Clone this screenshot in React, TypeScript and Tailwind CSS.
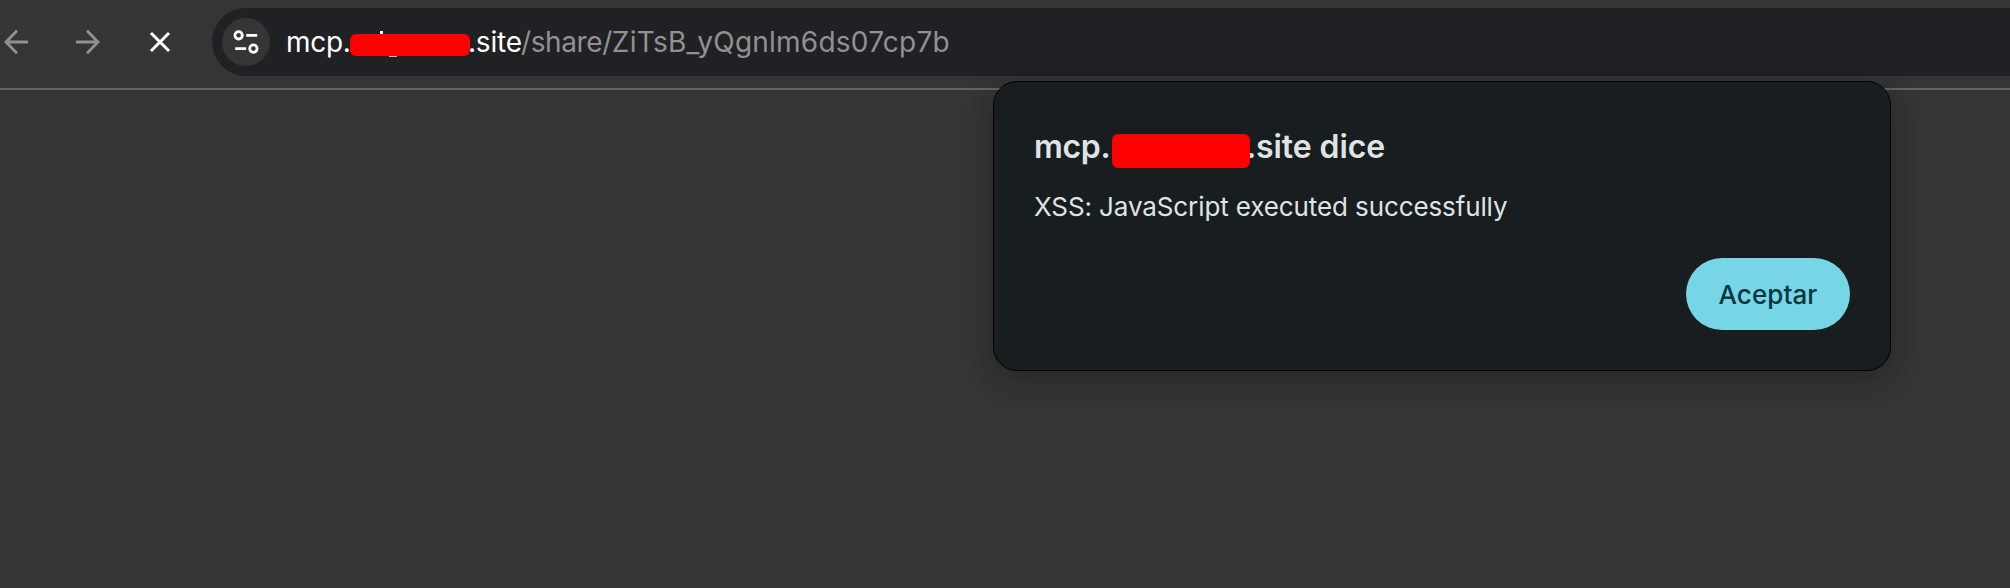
function BackIcon() {
  return (
    <svg width="26" height="26" viewBox="0 0 26 26" fill="none" stroke="#919191" strokeWidth="2.8" className="block">
      <path d="M25 13H2.5M14 1.8L3 13L14 24.2" />
    </svg>
  );
}

function ForwardIcon() {
  return (
    <svg width="26" height="26" viewBox="0 0 26 26" fill="none" stroke="#919191" strokeWidth="2.8" className="block">
      <path d="M0 13H22.5M11 1.8L22 13L11 24.2" />
    </svg>
  );
}

function StopIcon() {
  return (
    <svg width="22" height="22" viewBox="0 0 22 22" fill="none" stroke="#ffffff" strokeWidth="3" className="block">
      <path d="M2 2L20 20M20 2L2 20" />
    </svg>
  );
}

function TuneIcon() {
  return (
    <svg width="26" height="26" viewBox="0 0 26 26" fill="none" stroke="#ffffff" strokeWidth="2.8" className="block">
      <circle cx="5.6" cy="6.3" r="3.7" />
      <path d="M13.2 6.3H24.2M2.2 19.6H13.2" />
      <circle cx="20.4" cy="19.6" r="3.7" />
    </svg>
  );
}

function Toolbar() {
  return (
    <header className="flex h-[90px] items-start border-b-2 border-[#646464]">
      <div className="flex h-[84px] w-[212px] shrink-0 items-center pl-[3px]">
        <BackIcon />
        <div className="ml-[47px]">
          <ForwardIcon />
        </div>
        <div className="ml-[47px]">
          <StopIcon />
        </div>
      </div>
      <div className="mt-2 flex h-[68px] flex-1 items-center rounded-l-full bg-[#202124] pl-2.5">
        <div className="flex size-12 shrink-0 items-center justify-center rounded-full bg-[#353535]">
          <TuneIcon />
        </div>
        <div className="ml-4 flex h-[68px] items-center whitespace-pre text-[28px] leading-[68px] text-white">
          <span className="w-[64px] tracking-[-0.3px]">mcp.</span>
          <span className="relative z-10 mt-[6px] h-[22px] w-[120px] rounded-md bg-[#ff0000]">
            <span className="absolute -top-[3px] left-[30px] h-[3px] w-[3px] bg-white" />
            <span className="absolute top-[22px] left-[39px] h-px w-[8px] bg-[#bbbbbb]" />
          </span>
          <span className="-ml-[2px] w-[53px] tracking-[-0.2px]">.site</span>
          <span className="text-[#919191]">
            <span className="tracking-[-0.4px]">/share/</span>
            <span className="tracking-[0.23px]">ZiTsB_yQgnlm6ds07cp7b</span>
          </span>
        </div>
      </div>
    </header>
  );
}

function AlertDialog() {
  return (
    <section
      role="alertdialog"
      className="absolute top-[81px] left-[993px] flex h-[290px] w-[898px] flex-col rounded-[24px] border border-black bg-[#181d1f] px-10 text-[#dfe3e6] shadow-[0_8px_32px_rgba(0,0,0,0.3)]"
    >
      <h1 className="mt-[41px] flex h-[48px] items-center whitespace-pre text-[32px] leading-[48px] font-semibold">
        <span className="w-[78px] tracking-[-0.3px]">mcp.</span>
        <span className="relative z-10 mt-[8px] h-[34px] w-[138px] rounded-md bg-[#ff0000]" />
        <span className="-ml-[4px] tracking-[-0.1px]">.site dice</span>
      </h1>
      <p className="mt-[16px] h-10 whitespace-pre text-[26px] leading-10 tracking-[-0.11px]">
        XSS: JavaScript executed successfully
      </p>
      <button className="mt-[31px] h-[72px] w-[164px] self-end rounded-full bg-[#76d6e5] text-[26px] leading-[74px] font-medium tracking-[0.1px] text-[#00363d]">
        Aceptar
      </button>
    </section>
  );
}

export default function App() {
  return (
    <div className="relative h-[588px] w-[2010px] overflow-hidden border-b border-[#3a3236] bg-[#353535] font-['Inter',sans-serif]">
      <Toolbar />
      <AlertDialog />
    </div>
  );
}
